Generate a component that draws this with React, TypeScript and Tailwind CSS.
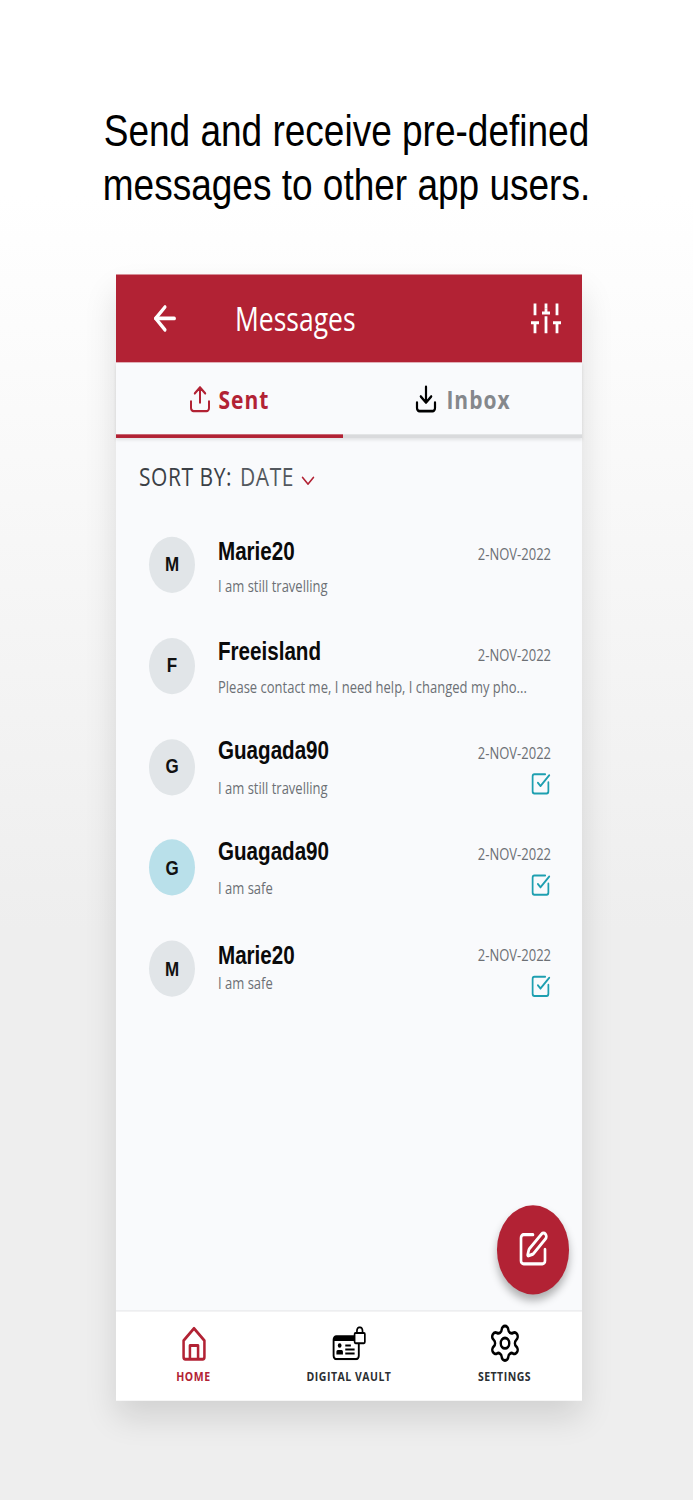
import { ArrowLeft, ChevronDown, Settings, SquareCheckBig, SquarePen } from "lucide-react";

const sans = "font-['Open_Sans','Noto_Sans',sans-serif]";
const arial = "font-['Liberation_Sans',Arial,sans-serif]";

function SlidersIcon() {
  return (
    <svg viewBox="0 0 32 32" preserveAspectRatio="none" className="h-[28px] w-[32px] text-white" fill="none" stroke="currentColor" strokeWidth="2.8">
      <path d="M5 2v11M5 20v10M1 20h8M16 2v5M16 14v16M12 11h8M27 2v11M27 20v10M23 20h8" strokeLinecap="butt" />
      <path d="M16 7v4" />
    </svg>
  );
}

function UploadTray({ className }: { className: string }) {
  return (
    <svg viewBox="0 0 24 24" className={className} fill="none" stroke="currentColor" strokeWidth="2" strokeLinecap="round" strokeLinejoin="round">
      <path d="M12 15V2.5M6.8 7.5 12 2.5l5.2 5M3 14v5.5A2.5 2.5 0 0 0 5.5 22h13a2.5 2.5 0 0 0 2.5-2.5V14" />
    </svg>
  );
}

function DownloadTray({ className }: { className: string }) {
  return (
    <svg viewBox="0 0 24 24" className={className} fill="none" stroke="currentColor" strokeWidth="2.2" strokeLinecap="round" strokeLinejoin="round">
      <path d="M12 2v13M6.8 10 12 15l5.2-5M3 15v4.5A2.5 2.5 0 0 0 5.5 22h13a2.5 2.5 0 0 0 2.5-2.5V15" />
    </svg>
  );
}

function HomeIcon() {
  return (
    <svg viewBox="0 0 28 32" className="h-[29px] w-[26px] text-[#b22234]" fill="none" stroke="currentColor" strokeWidth="2.8" strokeLinejoin="round">
      <path d="M14 2 2.5 13v15a2 2 0 0 0 2 2h19a2 2 0 0 0 2-2V13Z" />
      <path d="M9.5 30V17.5h9V30" />
    </svg>
  );
}

function VaultIcon() {
  return (
    <svg viewBox="0 0 36 30" className="h-[28px] w-[34px] text-black" fill="none">
      <rect x="1.5" y="9" width="27" height="20" rx="3" stroke="currentColor" strokeWidth="2" />
      <path d="M1.5 12a3 3 0 0 1 3-3H24v4H1.5Z" fill="currentColor" />
      <circle cx="8" cy="17" r="2" fill="currentColor" />
      <path d="M4.5 25v-2.5a1.5 1.5 0 0 1 1.5-1.5h4a1.5 1.5 0 0 1 1.5 1.5V25Z" fill="currentColor" />
      <path d="M14 17h6M14 20.5h10M14 24h10" stroke="currentColor" strokeWidth="1.6" />
      <rect x="24" y="6" width="11" height="9" rx="1" fill="#fff" stroke="currentColor" strokeWidth="1.8" />
      <path d="M26.5 6V4a3 3 0 0 1 6 0v2" stroke="currentColor" strokeWidth="1.8" />
    </svg>
  );
}

type RowProps = {
  initial: string;
  name: string;
  text: string;
  highlight?: boolean;
  check?: boolean;
  leftTop: string;
  subGap: string;
  rightTop: string;
};

function Row({ initial, name, text, highlight, check, leftTop, subGap, rightTop }: RowProps) {
  return (
    <div className="flex h-[82.8px] items-center pr-[31px] pl-[33px]">
      <div
        className={`flex h-[46px] w-[46px] shrink-0 items-center justify-center rounded-full ${arial} text-[17px] font-bold text-[#111] ${
          highlight ? "bg-[#b9e0ea]" : "bg-[#e1e5e8]"
        }`}
      >
        {initial}
      </div>
      <div className={`ml-[23px] flex h-full min-w-0 flex-1 flex-col ${leftTop}`}>
        <div className={`${arial} text-[20.6px] leading-[24px] font-bold text-[#0a0a0a]`}>{name}</div>
        <div className={`${sans} ${subGap} text-[13px] leading-[18px] whitespace-nowrap text-[#6c7075]`}>{text}</div>
      </div>
      <div className={`flex h-full shrink-0 flex-col items-end ${rightTop}`}>
        <div className={`${sans} text-[13px] leading-[18px] text-[#6c7075]`}>2-NOV-2022</div>
        {check && <SquareCheckBig className="mt-[5.7px] h-[21px] w-[21px] text-[#1e9fb0]" strokeWidth={2} />}
      </div>
    </div>
  );
}

export default function App() {
  return (
    <div className="h-[1500px] w-full overflow-hidden bg-[linear-gradient(to_bottom,#ffffff_0%,#ffffff_13%,#eeeeee_62%,#eeeeee_100%)]">
      <div className="flex h-[1229.5px] origin-top scale-y-[1.22] flex-col items-center pt-[86px]">
        <h1 className={`${arial} text-center text-[37px] leading-[44px] font-normal text-black`}>
          Send and receive pre-defined
          <br />
          messages to other app users.
        </h1>
        <div className="mt-[51.4px] ml-[5px] flex h-[923px] w-[466px] flex-col bg-[#f9fafc] shadow-[0_14px_28px_rgba(0,0,0,0.12)]">
          <header className="flex h-[71.3px] shrink-0 items-center bg-[#b22234] pr-[20px] pl-[33px] text-white">
            <ArrowLeft className="h-[32px] w-[32px]" strokeWidth={2.3} />
            <div className={`${sans} ml-[54px] flex-1 text-[26.5px] leading-none`}>Messages</div>
            <SlidersIcon />
          </header>
          <div className="flex h-[62.3px] shrink-0 shadow-[0_2px_3px_rgba(0,0,0,0.1)]">
            <div className="flex w-[227px] items-center justify-center gap-[7px] border-b-[3px] border-[#b22234] pt-[2px] pr-[2px] text-[#b22234]">
              <UploadTray className="h-[24px] w-[24px]" />
              <span className={`${sans} text-[21px] leading-none font-bold tracking-[1px]`}>Sent</span>
            </div>
            <div className="flex flex-1 items-center justify-center gap-[8px] border-b-[3px] border-[#d9dadc] pt-[2px]">
              <DownloadTray className="h-[24px] w-[24px] text-black" />
              <span className={`${sans} text-[21px] leading-none font-bold tracking-[1px] text-[#85888c]`}>Inbox</span>
            </div>
          </div>
          <main className="relative flex min-h-0 flex-1 flex-col">
            <div className={`${sans} flex h-[62.7px] shrink-0 items-center pt-[1px] pl-[23px] text-[21px] leading-none tracking-[0.55px] text-[#3b4046]`}>
              <span>SORT BY:</span>
              <span className="ml-[8px] text-[#53585e]">DATE</span>
              <ChevronDown className="mt-[6px] ml-[3px] h-[22px] w-[22px] text-[#b22234]" strokeWidth={1.6} />
            </div>
            <Row initial="M" name="Marie20" text="I am still travelling" leftTop="pt-[17.9px]" subGap="mt-[7.7px]" rightTop="pt-[23.4px]" />
            <Row initial="F" name="Freeisland" text="Please contact me, I need help, I changed my pho..." leftTop="pt-[17.1px]" subGap="mt-[8.3px]" rightTop="pt-[23.4px]" />
            <Row initial="G" name="Guagada90" text="I am still travelling" check leftTop="pt-[15.5px]" subGap="mt-[9.9px]" rightTop="pt-[21px]" />
            <Row initial="G" name="Guagada90" text="I am safe" highlight check leftTop="pt-[15.5px]" subGap="mt-[9.9px]" rightTop="pt-[21px]" />
            <Row initial="M" name="Marie20" text="I am safe" check leftTop="pt-[17.9px]" subGap="mt-[2px]" rightTop="pt-[21px]" />
            <button className="absolute right-[13px] bottom-[13.4px] flex h-[73px] w-[72px] items-center justify-center rounded-full bg-[#b22234] shadow-[0_5px_8px_rgba(0,0,0,0.3)]">
              <SquarePen className="h-[32px] w-[32px] text-white" strokeWidth={2} />
            </button>
          </main>
          <nav className="flex h-[74.5px] shrink-0 border-t border-[#e7e8ea] bg-white">
            <div className="flex w-[155px] flex-col items-center pt-[12.5px]">
              <HomeIcon />
              <span className={`${sans} mt-[4.3px] text-[10.5px] leading-[14px] font-bold tracking-[0.6px] text-[#b22234]`}>HOME</span>
            </div>
            <div className="flex flex-1 flex-col items-center pt-[12.5px]">
              <VaultIcon />
              <span className={`${sans} mt-[5.3px] text-[10.5px] leading-[14px] font-bold tracking-[0.5px] text-[#2c2f33]`}>DIGITAL VAULT</span>
            </div>
            <div className="flex w-[155px] flex-col items-center pt-[9.5px]">
              <Settings className="h-[34px] w-[34px] text-black" strokeWidth={1.7} />
              <span className={`${sans} mt-[2.3px] text-[10.5px] leading-[14px] font-bold tracking-[0.5px] text-[#2c2f33]`}>SETTINGS</span>
            </div>
          </nav>
        </div>
      </div>
    </div>
  );
}
